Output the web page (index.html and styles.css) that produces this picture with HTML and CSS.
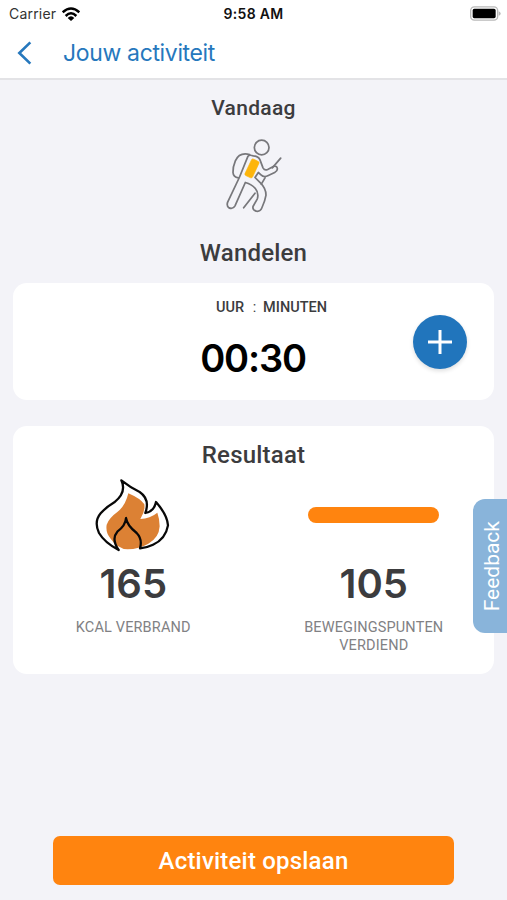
FILE: index.html
```html
<!DOCTYPE html>
<html lang="nl">
<head>
<meta charset="utf-8">
<meta name="viewport" content="width=device-width, initial-scale=1">
<title>Jouw activiteit</title>
<link rel="stylesheet" href="styles.css">
</head>
<body>
<div class="app">
  <header class="header">
    <div class="status">
      <div class="status-left">
        <span class="carrier">Carrier</span>
        <svg class="wifi" viewBox="0 0 54 40">
          <g fill="none" stroke="#000" stroke-width="7.5">
            <path d="M2 15Q27-8 52 15"/>
            <path d="M11 26Q27 10 43 26"/>
          </g>
          <path d="M17 32Q27 22 37 32L27 41Z"/>
        </svg>
      </div>
      <span class="clock">9:58 AM</span>
      <svg class="battery" viewBox="0 0 93 44">
        <rect x="2" y="2" width="81" height="40" rx="11" fill="#fff" stroke="#b9b9b9" stroke-width="4"/>
        <rect x="8" y="8" width="69" height="28" rx="5"/>
        <path d="M86 15Q92 17 92 22T86 29Z" fill="#b9b9b9"/>
      </svg>
    </div>
    <nav class="nav">
      <svg class="back" viewBox="0 0 45 72"><path d="M40 4L7 36L40 68" fill="none" stroke="#2678bd" stroke-width="8"/></svg>
      <h1 class="title">Jouw activiteit</h1>
    </nav>
  </header>

  <main class="main">
    <h2 class="day">Vandaag</h2>
    <svg class="walker" viewBox="70 140 180 230">
      <g fill="none" stroke="#77777b" stroke-width="5.2" stroke-linecap="round" stroke-linejoin="round">
        <circle cx="183" cy="171" r="22"/>
        <path d="M147 192Q116 184 104 211Q96 230 97 246Q98 260 113 262"/>
        <path d="M142 197Q146 192 158 196Q174 198 178 208L187 232Q192 241 201 237L218 228Q229 225 230 234Q231 241 222 246L203 255Q190 262 181 253L173 246L163 261L180 278Q196 294 196 314Q193 332 184 351Q179 364 167 362Q155 359 157 348L170 325Q175 307 164 294Q153 281 134 276L103 346Q97 357 85 352Q77 346 81 335L116 261Z"/>
        <path d="M193 262L182 281M240 203L215 232M163 308L129 352"/>
      </g>
      <path d="M153 207Q155 204 159 206L173 213Q176 215 175 218L156 259Q154 263 150 262L135 255Q132 253 133 249Z" fill="#fdb50b" stroke="#fdb50b" stroke-width="2"/>
    </svg>
    <h2 class="activity">Wandelen</h2>

    <section class="card duration">
      <div class="units"><span>UUR</span><span class="colon">:</span><span>MINUTEN</span></div>
      <div class="time">00:30</div>
      <button class="add" aria-label="Toevoegen">
        <svg viewBox="0 0 24 24"><path d="M12 0V24M0 12H24" stroke="#fff" stroke-width="3"/></svg>
      </button>
    </section>

    <section class="card result">
      <h2 class="result-title">Resultaat</h2>
      <div class="stats">
        <div class="stat">
          <div class="art">
            <svg class="flame" viewBox="40 140 240 228">
              <path d="M146 189Q183 205 194 222Q197 243 182 266Q211 265 233 247Q240 266 240 288Q238 323 206 340Q178 356 144 357Q113 355 93 325Q77 307 81 283Q88 263 113 245Q137 227 146 189Z" fill="#dc8134"/>
              <path d="M117 359Q75 337 58 308Q42 274 63 249Q78 232 104 216Q142 186 125 150Q153 172 180 185Q212 207 197 248Q223 244 229 215Q263 254 265 285Q258 326 220 343Q204 351 181 354Q189 327 171 308Q142 285 139 263Q138 285 113 304Q94 326 117 359Z" fill="none" stroke="#080808" stroke-width="6.8" stroke-linejoin="round"/>
            </svg>
          </div>
          <div class="number">165</div>
          <div class="label">KCAL VERBRAND</div>
        </div>
        <div class="stat">
          <div class="art"><div class="bar"></div></div>
          <div class="number">105</div>
          <div class="label">BEWEGINGSPUNTEN<br>VERDIEND</div>
        </div>
      </div>
    </section>

    <button class="save">Activiteit opslaan</button>
  </main>
  <div class="feedback"><span>Feedback</span></div>
</div>
</body>
</html>
```
FILE: styles.css
```css
* { box-sizing: border-box; }
body { margin: 0; background: #f3f3f8; font-family: Roboto, "Liberation Sans", sans-serif; color: #3c3c3e; }
h1, h2 { margin: 0; font-weight: 500; }
svg { display: block; }
button { border: 0; padding: 0; font-family: inherit; }
.app { position: relative; width: 507px; height: 900px; overflow: hidden; }
.header { height: 80px; background: #fff; border-bottom: 2px solid #e3e3e6; }
.status { height: 27px; display: grid; grid-template-columns: 1fr auto 1fr; align-items: center; padding: 0 6px 0 9px; font-family: Inter, sans-serif; color: #111; font-size: 14px; }
.status-left { display: flex; align-items: center; gap: 6px; }
.carrier { color: #333; letter-spacing: .2px; }
.wifi { width: 18px; height: 14px; }
.clock { margin-right: 3px; font-weight: 600; font-size: 14px; letter-spacing: .3px; }
.battery { width: 31px; height: 15px; justify-self: end; }
.nav { display: flex; align-items: center; height: 51px; padding: 1px 0 0 17px; }
.back { width: 15px; height: 24px; }
.title { margin-left: 31px; font: 400 23px/50px Inter, sans-serif; letter-spacing: -.35px; color: #2678bd; }
.main { display: flex; flex-direction: column; align-items: center; height: 820px; padding: 14px 13px 15px; }
.day { font-size: 21px; line-height: 28px; letter-spacing: .3px; }
.walker { width: 60px; height: 77px; margin-top: 15px; }
.activity { margin-top: 23px; font-size: 24px; line-height: 32px; letter-spacing: .2px; }
.card { width: 100%; background: #fff; border-radius: 14px; }
.duration { height: 117px; margin-top: 14px; display: grid; grid-template: 49px 68px / 135px 212px 134px; justify-items: center; }
.units { grid-area: 1 / 2; display: flex; margin-left: 35px; font-size: 14.5px; line-height: 50px; font-weight: 500; }
.colon { width: 19px; padding-left: 2px; text-align: center; font-weight: 400; }
.time { grid-area: 2 / 2; margin-right: 2px; font: 600 38px/52px Inter, sans-serif; letter-spacing: -1.2px; color: #000; }
.add { grid-area: 1 / 3 / 3 / 4; align-self: center; justify-self: end; margin-right: 27px; display: grid; place-items: center; width: 54px; height: 54px; border-radius: 50%; background: #2175bc; box-shadow: 0 2px 4px #0002; }
.add svg { width: 24px; height: 24px; }
.result { height: 248px; margin-top: 26px; padding-top: 12px; text-align: center; }
.result-title { font-size: 24px; line-height: 34px; letter-spacing: .2px; }
.stats { display: grid; grid-template-columns: 1fr 1fr; }
.stat { display: flex; flex-direction: column; align-items: center; }
.art { height: 85px; display: flex; align-items: center; }
.flame { width: 80px; height: 76px; }
.bar { width: 131px; height: 16px; border-radius: 8px; background: #ff840f; }
.number { font: 600 40px/54px Inter, sans-serif; }
.label { margin-top: 8px; font-size: 14.5px; line-height: 17.5px; letter-spacing: .15px; color: #818184; }
.save { width: 401px; height: 49px; margin-top: auto; border-radius: 7px; background: #ff840f; color: #fff; font-size: 24px; font-weight: 500; letter-spacing: .2px; }
.feedback { position: absolute; right: 0; top: 499px; width: 34px; height: 134px; padding-left: 3px; display: grid; place-items: center; background: #89b4da; border-radius: 12px 0 0 12px; color: #fff; font-size: 21px; }
.feedback span { writing-mode: vertical-rl; transform: rotate(180deg); }
```
